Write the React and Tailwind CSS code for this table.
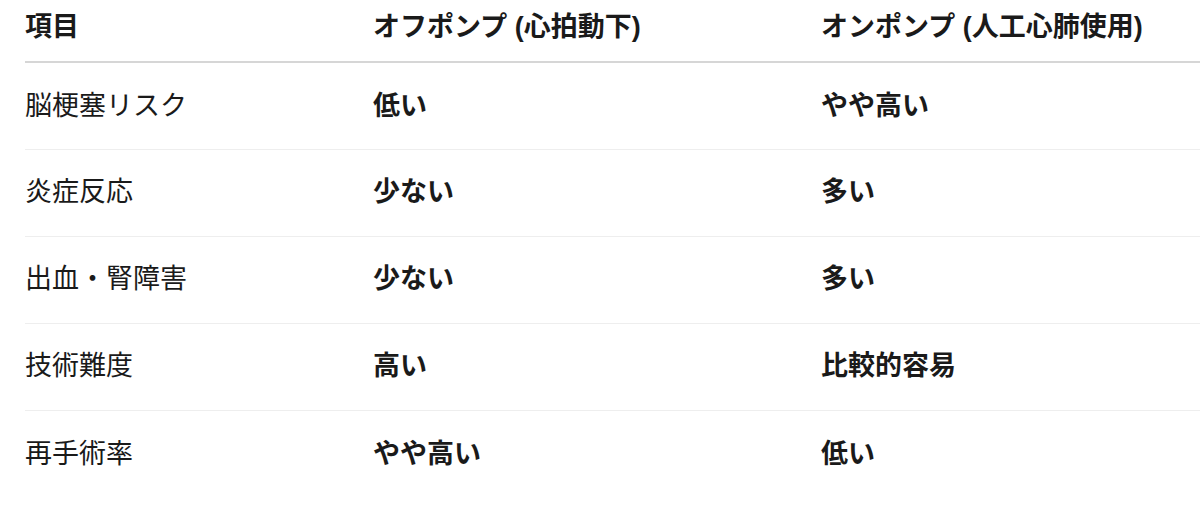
import React from 'react'

const rows = [
    ["脳梗塞リスク", "低い", "やや高い"],
    ["炎症反応", "少ない", "多い"],
    ["出血・腎障害", "少ない", "多い"],
    ["技術難度", "高い", "比較的容易"],
    ["再手術率", "やや高い", "低い"],
];

const App = () => {
    return (
        <div
            className="w-[1200px] h-[510px] bg-white pl-[25px] overflow-hidden text-[#1a1a1a]"
            style={{ fontFamily: '"Liberation Sans", "Noto Sans CJK JP", sans-serif' }}
        >
            <table className="w-[1175px] border-collapse table-fixed">
                <colgroup>
                    <col className="w-[348px]" />
                    <col className="w-[448px]" />
                    <col />
                </colgroup>
                <thead>
                    <tr className="h-[62px] border-b-2 border-[#d6d6d6] text-left text-[27px] font-bold">
                        <th className="p-0 pb-[6px] font-bold">項目</th>
                        <th className="p-0 pb-[6px] font-bold">オフポンプ (心拍動下)</th>
                        <th className="p-0 pb-[6px] font-bold">オンポンプ (人工心肺使用)</th>
                    </tr>
                </thead>
                <tbody>
                    {rows.map((r, i) => (
                        <tr
                            key={i}
                            className={`h-[87px] text-[27px] ${i < rows.length - 1 ? "border-b border-[#eeeeee]" : ""}`}
                        >
                            <td className="p-0">{r[0]}</td>
                            <td className="p-0 font-bold">{r[1]}</td>
                            <td className="p-0 font-bold">{r[2]}</td>
                        </tr>
                    ))}
                </tbody>
            </table>
        </div>
    )
}

export default App
